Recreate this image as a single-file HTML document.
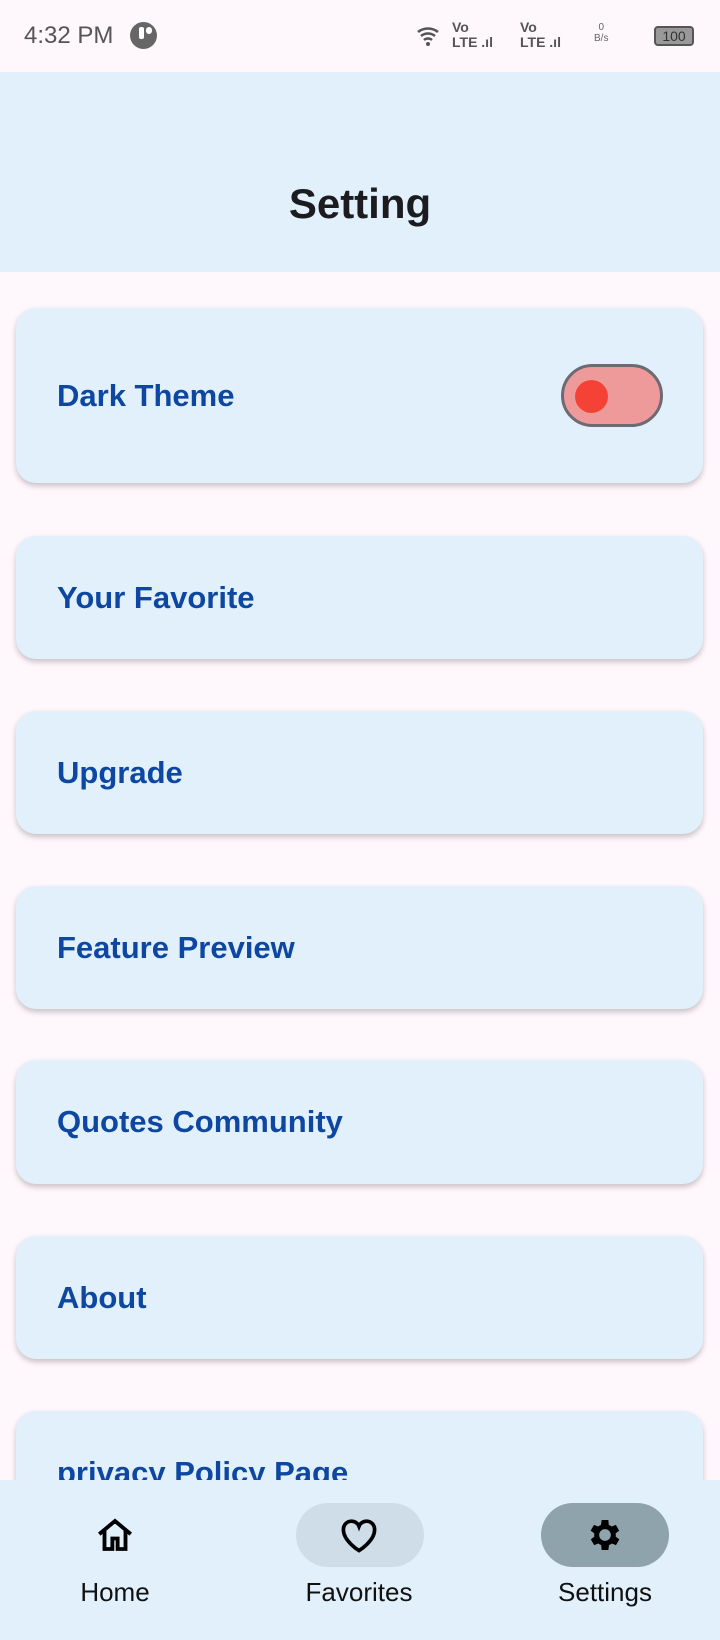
<!DOCTYPE html>
<html><head><meta charset="utf-8"><style>
*{margin:0;padding:0;box-sizing:border-box}
body{width:720px;height:1640px;background:#fef7fb;font-family:"Liberation Sans",sans-serif;position:relative;overflow:hidden}
.sb{position:absolute;top:0;left:0;width:720px;height:72px;color:#555}
.hdr{position:absolute;top:72px;left:0;width:720px;height:200px;background:#e1f0fb}
.hdr h1{position:absolute;width:100%;top:108px;text-align:center;font-size:42px;font-weight:bold;color:#1c1b1f}
.card{position:absolute;left:16px;width:687px;background:#e1f0fb;border-radius:20px;box-shadow:0 3px 6px rgba(0,0,0,.22)}
.card span{position:absolute;left:41px;top:50%;transform:translateY(-50%);font-size:31px;font-weight:bold;color:#0d47a1}
.nav{position:absolute;top:1480px;left:0;width:720px;height:160px;background:#e1f0fb}
.lbl{position:absolute;top:97px;font-size:26px;color:#111;transform:translateX(-50%)}
.pill{position:absolute;top:23px;width:128px;height:64px;border-radius:32px}
</style></head><body>
<div class="sb">
<div style="position:absolute;left:24px;top:22px;font-size:24px">4:32 PM</div>
<div style="position:absolute;left:130px;top:22px;width:27px;height:27px;border-radius:50%;background:#666"></div>
<div style="position:absolute;left:139px;top:27px;width:5px;height:12px;background:#fff;border-radius:2px"></div>
<div style="position:absolute;left:146px;top:27px;width:6px;height:7px;background:#fff;border-radius:3px"></div>
<svg style="position:absolute;left:416px;top:24px" width="28" height="24" viewBox="0 0 28 24"><path d="M2 8a16 16 0 0 1 20 0M5 12a11 11 0 0 1 14 0M8 16a6 6 0 0 1 8 0" fill="none" stroke="#555" stroke-width="2.5"/><circle cx="12" cy="20" r="2" fill="#555"/></svg>
<div style="position:absolute;left:452px;top:20px;font-size:14px;font-weight:bold;color:#555;line-height:15px">Vo<br>LTE .ıl</div>
<div style="position:absolute;left:520px;top:20px;font-size:14px;font-weight:bold;color:#555;line-height:15px">Vo<br>LTE .ıl</div>
<div style="position:absolute;left:594px;top:22px;font-size:10px;color:#666;text-align:center">0<br>B/s</div>
<div style="position:absolute;left:654px;top:26px;width:40px;height:20px;border:2px solid #555;border-radius:4px;background:#999;font-size:14px;text-align:center;line-height:16px;color:#333">100</div>
</div>
<div class="hdr"><h1>Setting</h1></div>
<div class="card" style="top:308px;height:175px"><span>Dark Theme</span>
<div style="position:absolute;left:545px;top:56px;width:102px;height:63px;border:3px solid #6d6a74;border-radius:32px;background:#ef9a9a"></div>
<div style="position:absolute;left:559px;top:72px;width:33px;height:33px;border-radius:50%;background:#f44336"></div>
</div>
<div class="card" style="top:536px;height:123px"><span>Your Favorite</span></div>
<div class="card" style="top:711px;height:123px"><span>Upgrade</span></div>
<div class="card" style="top:886px;height:123px"><span>Feature Preview</span></div>
<div class="card" style="top:1060px;height:124px"><span>Quotes Community</span></div>
<div class="card" style="top:1236px;height:123px"><span>About</span></div>
<div class="card" style="top:1411px;height:123px"><span>privacy Policy Page</span></div>
<div class="nav">
<svg style="position:absolute;left:94px;top:34px" width="42" height="42" viewBox="0 0 24 24"><path d="M3 11.5L12 4l9 7.5M6 9.5V20h4.5v-6h3v6H18V9.5" fill="none" stroke="#000" stroke-width="2.2"/></svg>
<div class="lbl" style="left:115px">Home</div>
<div class="pill" style="left:296px;background:#cfdde8"></div>
<svg style="position:absolute;left:336px;top:33px" width="46" height="44" viewBox="0 0 24 24"><path d="M12 20.5s-8.5-5.2-8.5-11.3A4.4 4.4 0 0 1 12 7.3a4.4 4.4 0 0 1 8.5 1.9c0 6.1-8.5 11.3-8.5 11.3z" fill="none" stroke="#000" stroke-width="2"/></svg>
<div class="lbl" style="left:359px">Favorites</div>
<div class="pill" style="left:541px;background:#8fa3ad"></div>
<svg style="position:absolute;left:585px;top:35px" width="40" height="40" viewBox="0 0 24 24"><path d="M19.4 13a7.5 7.5 0 0 0 0-2l2.1-1.6-2-3.5-2.5 1a7 7 0 0 0-1.7-1L15 3h-4l-.4 2.9a7 7 0 0 0-1.7 1l-2.5-1-2 3.5L6.6 11a7.5 7.5 0 0 0 0 2l-2.1 1.6 2 3.5 2.5-1a7 7 0 0 0 1.7 1L11 21h4l.4-2.9a7 7 0 0 0 1.7-1l2.5 1 2-3.5zM13 15.5a3.5 3.5 0 1 1 0-7 3.5 3.5 0 0 1 0 7z" transform="translate(-1 0)" fill="#000"/></svg>
<div class="lbl" style="left:605px">Settings</div>
</div>
</body></html>
